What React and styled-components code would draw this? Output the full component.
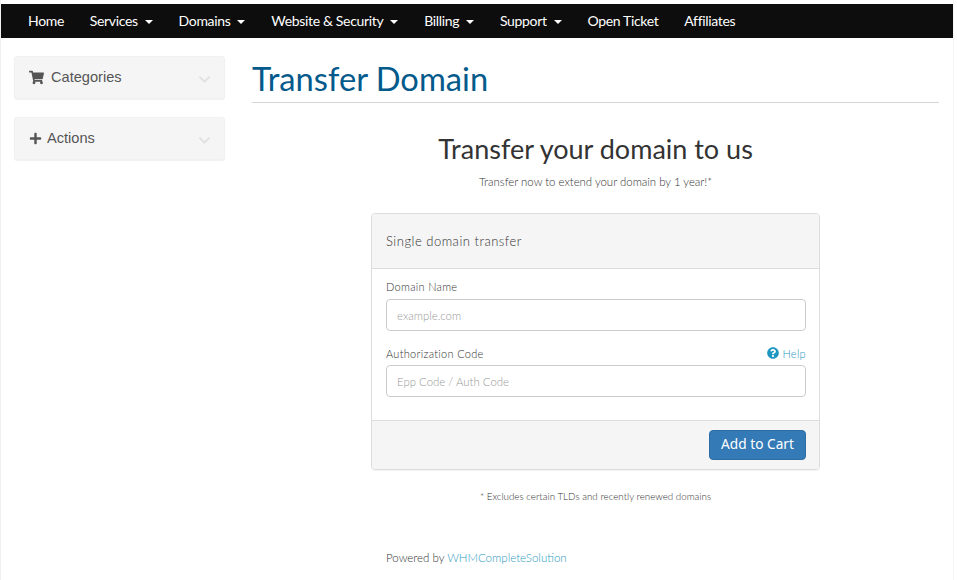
import styled, { createGlobalStyle } from "styled-components";
import { FaShoppingCart, FaPlus, FaChevronDown, FaQuestionCircle } from "react-icons/fa";

const GlobalStyle = createGlobalStyle`
body {
  margin: 0;
  background: #fff;
  font-family: "Lato", "Liberation Sans", sans-serif;
  overflow: hidden;
}
`;

const Page = styled.div`
width: 952px;
height: 580px;
margin-left: 1px;
padding-top: 4px;
box-sizing: border-box;
overflow: hidden;
box-shadow: -1px 0 0 #f1f1f1, 1px 0 0 #f4f4f4;
`;
const Navbar = styled.nav`
height: 34px;
background: #0d0d0d;
display: flex;
align-items: center;
padding: 0 0 2px 27px;
box-sizing: border-box;
gap: 25.8px;
`;
const NavLink = styled.a`
color: #fff;
font-size: 14px;
letter-spacing: -0.33px;
display: flex;
align-items: center;
gap: 7px;
`;
const Caret = styled.span`
width: 0;
height: 0;
margin-top: 3px;
border-top: 4px solid #fff;
border-left: 4px solid transparent;
border-right: 4px solid transparent;
`;
const Columns = styled.div`
display: flex;
padding: 18px 14px 0 13px;
gap: 27px;
`;
const Sidebar = styled.aside`
width: 211px;
flex: none;
display: flex;
flex-direction: column;
gap: 18px;
`;
const SidePanel = styled.div`
height: 43px;
box-sizing: border-box;
background: #f5f5f5;
border-radius: 3px;
box-shadow: 0 1px 1px rgba(0, 0, 0, 0.06);
border: 1px solid #f1f1f1;
display: flex;
align-items: center;
padding: 0 13px 0 14px;
color: #555;
font-family: "Liberation Sans", Arial, sans-serif;
font-size: 14.6px;
`;
const SideTitle = styled.span`
flex: 1;
margin-left: ${(props) => props.$gap}px;
margin-top: -2px;
`;
const Chevron = styled(FaChevronDown)`
color: #e2e2e2;
font-size: 13px;
margin-top: 3px;
`;
const Main = styled.main`
flex: 1;
`;
const PageTitle = styled.h1`
margin: 0;
height: 46px;
line-height: 46px;
font-size: 32.7px;
font-weight: 400;
color: #045a8b;
border-bottom: 1px solid #d5d5d5;
`;
const Center = styled.div`
width: 449px;
margin: 0 auto;
display: flex;
flex-direction: column;
align-items: stretch;
text-align: center;
`;
const Heading = styled.h2`
margin: 28px 0 0;
font-size: 27px;
line-height: 36px;
font-weight: 400;
color: #333;
`;
const SubText = styled.p`
margin: 7px 0 0;
font-size: 11.4px;
line-height: 16px;
font-weight: 300;
color: #333;
`;
const Card = styled.div`
margin-top: 23px;
height: 257px;
box-sizing: border-box;
border: 1px solid #ddd;
border-radius: 4px;
box-shadow: 0 1px 1px rgba(0, 0, 0, 0.05);
display: flex;
flex-direction: column;
text-align: left;
overflow: hidden;
`;
const CardHeader = styled.div`
height: 55px;
flex: none;
box-sizing: border-box;
background: #f5f5f5;
border-bottom: 1px solid #ddd;
padding: 0 14px;
display: flex;
align-items: center;
font-size: 13px;
letter-spacing: 0.5px;
font-weight: 300;
color: #333;
`;
const CardBody = styled.div`
flex: 1;
padding: 10px 13px 0 14px;
display: flex;
flex-direction: column;
`;
const LabelRow = styled.div`
display: flex;
justify-content: space-between;
align-items: center;
height: 14px;
margin-top: ${(props) => props.$top || 0}px;
font-size: 11px;
font-weight: 300;
letter-spacing: 0.3px;
color: #333;
`;
const HelpLink = styled.a`
display: flex;
align-items: center;
gap: 3px;
color: #1d97c1;
`;
const Input = styled.input`
display: block;
width: 100%;
height: 32px;
box-sizing: border-box;
margin-top: ${(props) => props.$top || 5}px;
padding: 0 10px;
border: 1px solid #ccc;
border-radius: 4px;
background: #fff;
font-family: inherit;
font-size: 11.4px;
font-weight: 300;
&::placeholder {
  color: #999;
  opacity: 1;
}
`;
const CardFooter = styled.div`
height: 49px;
flex: none;
box-sizing: border-box;
background: #f5f5f5;
border-top: 1px solid #ddd;
padding: 9px 13px 0 14px;
display: flex;
justify-content: flex-end;
align-items: flex-start;
`;
const Button = styled.button`
width: 97px;
height: 30px;
padding: 0 0 3px;
border: 1px solid #2e6da4;
border-radius: 4px;
background: #337ab7;
color: #fff;
font-family: "Noto Sans", "Open Sans", sans-serif;
font-size: 13.7px;
`;
const Note = styled.p`
margin: 19px 0 0;
font-size: 9.8px;
line-height: 14px;
font-weight: 300;
color: #333;
`;
const Powered = styled.p`
margin: 47px 0 0;
padding-left: 15px;
text-align: left;
font-size: 11.5px;
line-height: 16px;
font-weight: 300;
color: #333;
`;
const PoweredLink = styled.a`
color: #2f9ac0;
`;

const navItems = [
  { label: "Home" },
  { label: "Services", menu: true },
  { label: "Domains", menu: true },
  { label: "Website & Security", menu: true },
  { label: "Billing", menu: true },
  { label: "Support", menu: true },
  { label: "Open Ticket" },
  { label: "Affiliates" },
];

export default function App() {
  return (
    <Page>
      <GlobalStyle />
      <Navbar>
        {navItems.map((item) => (
          <NavLink key={item.label}>
            {item.label}
            {item.menu && <Caret />}
          </NavLink>
        ))}
      </Navbar>
      <Columns>
        <Sidebar>
          <SidePanel>
            <FaShoppingCart size={15} />
            <SideTitle $gap={7}>Categories</SideTitle>
            <Chevron />
          </SidePanel>
          <SidePanel>
            <FaPlus size={13} />
            <SideTitle $gap={5}>Actions</SideTitle>
            <Chevron />
          </SidePanel>
        </Sidebar>
        <Main>
          <PageTitle>Transfer Domain</PageTitle>
          <Center>
            <Heading>Transfer your domain to us</Heading>
            <SubText>Transfer now to extend your domain by 1 year!*</SubText>
            <Card>
              <CardHeader>Single domain transfer</CardHeader>
              <CardBody>
                <LabelRow>Domain Name</LabelRow>
                <Input $top={6} placeholder="example.com" />
                <LabelRow $top={15}>
                  Authorization Code
                  <HelpLink>
                    <FaQuestionCircle size={12} />
                    Help
                  </HelpLink>
                </LabelRow>
                <Input placeholder="Epp Code / Auth Code" />
              </CardBody>
              <CardFooter>
                <Button>Add to Cart</Button>
              </CardFooter>
            </Card>
            <Note>* Excludes certain TLDs and recently renewed domains</Note>
            <Powered>
              Powered by <PoweredLink>WHMCompleteSolution</PoweredLink>
            </Powered>
          </Center>
        </Main>
      </Columns>
    </Page>
  );
}
